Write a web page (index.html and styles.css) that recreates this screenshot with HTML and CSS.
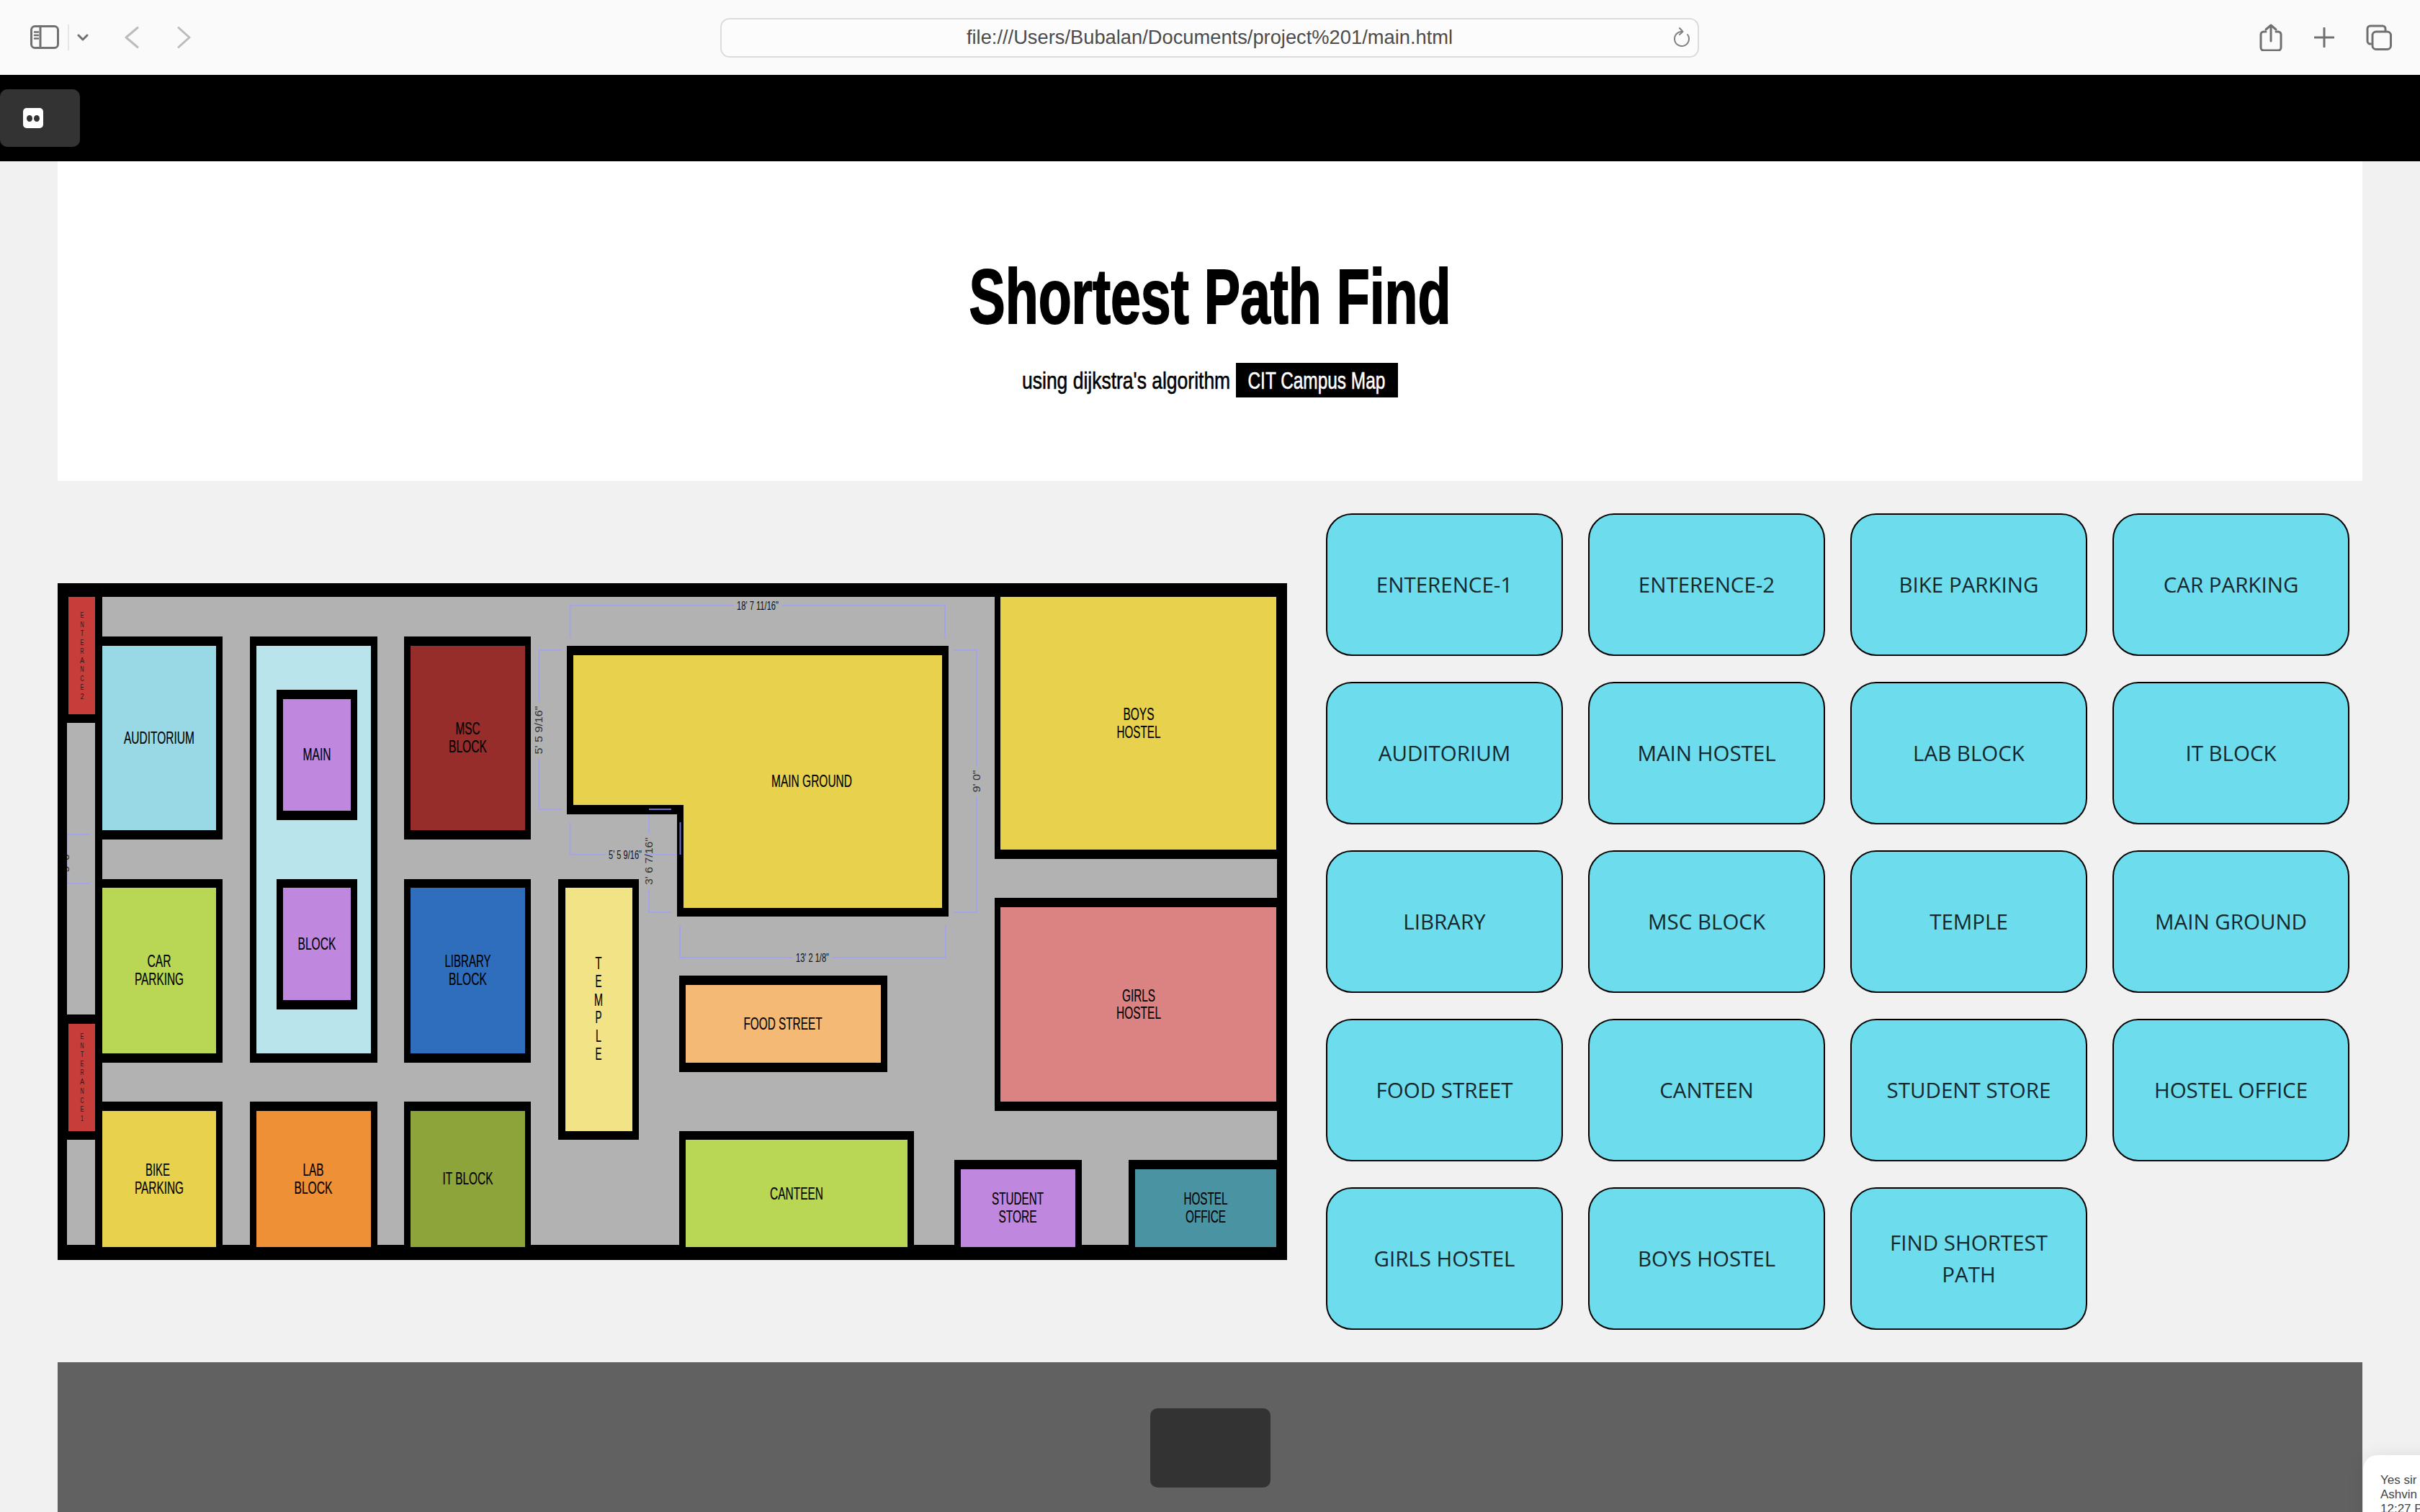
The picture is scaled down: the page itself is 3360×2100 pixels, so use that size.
FILE: index.html
```html
<!DOCTYPE html>
<html lang="en">
<head>
<meta charset="utf-8">
<title>Shortest Path Find</title>
<link rel="stylesheet" href="styles.css">
</head>
<body>
<header class="toolbar">
  <div class="tb-left">
    <svg class="tb-icon sidebar-icon" width="42" height="34" viewBox="0 0 42 34"><rect x="1.5" y="1.5" width="37" height="30" rx="5"/><path d="M14 2v29"/><path class="thin" d="M6 9.500h5M6 14h5M6 18.500h5"/></svg>
    <span class="tb-sep"></span>
    <svg class="tb-icon chevron" width="16" height="10" viewBox="0 0 16 10"><path d="M2 2l6 6 6-6"/></svg>
    <svg class="tb-icon nav back" width="20" height="30" viewBox="0 0 20 30"><path d="M18 1.500L2 15l16 13.500"/></svg>
    <svg class="tb-icon nav forward" width="20" height="30" viewBox="0 0 20 30"><path d="M2 1.500L17 15 2 28.500"/></svg>
  </div>
  <div class="urlbar">
    <span class="url-text">file:///Users/Bubalan/Documents/project%201/main.html</span>
    <svg class="tb-icon reload" width="24" height="30" viewBox="0 0 24 30"><path d="M20 11A10 10 0 1 1 12 7"/><path d="M9 2l4.500 5L9 11"/></svg>
  </div>
  <div class="tb-right">
    <svg class="tb-icon" width="32" height="38" viewBox="0 0 32 38"><path d="M9 11H6a4 4 0 0 0-4 4v18a4 4 0 0 0 4 4h20a4 4 0 0 0 4-4V15a4 4 0 0 0-4-4h-3"/><path d="M16 24V2M9 8l7-6 7 6"/></svg>
    <svg class="tb-icon" width="28" height="28" viewBox="0 0 28 28"><path d="M14 1v26M1 14h26"/></svg>
    <svg class="tb-icon" width="36" height="36" viewBox="0 0 36 36"><path d="M6.500 27H6a4 4 0 0 1-4-4V6a4 4 0 0 1 4-4h17a4 4 0 0 1 4 4v2"/><rect x="9" y="10" width="25.500" height="24.500" rx="5"/></svg>
  </div>
</header>

<div class="blackbar">
  <div class="blackbar-btn">
    <svg width="28" height="28" viewBox="0 0 28 28"><rect class="logo-bg" width="28" height="28" rx="5"/><ellipse class="logo-dot" cx="9" cy="14.500" rx="4" ry="4.500"/><ellipse class="logo-dot" cx="19" cy="14.500" rx="4" ry="4.500"/></svg>
  </div>
</div>

<div class="page">
  <section class="hero">
    <h1 class="title">Shortest Path Find</h1>
    <p class="subtitle"><span class="sub-text"><span class="squeeze-a">using dijkstra's algorithm</span></span><span class="sub-tag"><span class="squeeze-b">CIT Campus Map</span></span></p>
  </section>

  <main class="content">
    <svg class="map" width="1707" height="940" viewBox="80 810 1707 940">
      <rect class="wall" x="80" y="810" width="1707" height="940"/>
      <rect class="road" x="142" y="829" width="1631" height="900"/>
      <rect class="road" x="93" y="1004" width="39" height="405"/>
      <rect class="road" x="93" y="1583" width="39" height="146"/>

      <g class="dims">
        <path d="M791.500 886V841H1019M1086 841H1312V886"/>
        <path d="M779 903H748.500V975M748.500 1054V1124H779"/>
        <path d="M1325 903H1356V1065M1356 1106V1267H1325"/>
        <path d="M791.500 1142V1187H841M895 1187H944.500V1142"/>
        <path d="M932 1124H901V1157M901 1235V1267H932"/>
        <path d="M944 1285V1330H1100M1155 1330H1313V1285"/>
        <path d="M125 1159H93.500V1227H125"/>
      </g>
      <text class="dim-h" x="1052" y="847" textLength="58" lengthAdjust="spacingAndGlyphs">18' 7 11/16"</text>
      <text class="dim-h" x="868" y="1193" textLength="46" lengthAdjust="spacingAndGlyphs">5' 5 9/16"</text>
      <text class="dim-h" x="1128" y="1336" textLength="46" lengthAdjust="spacingAndGlyphs">13' 2 1/8"</text>
      <text class="dim-v" x="753" y="1014" transform="rotate(-90 753 1014)" textLength="67" lengthAdjust="spacingAndGlyphs">5' 5 9/16"</text>
      <text class="dim-v" x="1361" y="1085" transform="rotate(-90 1361 1085)" textLength="31" lengthAdjust="spacingAndGlyphs">9' 0"</text>
      <text class="dim-v" x="96" y="1196" transform="rotate(-90 96 1196)" textLength="31" lengthAdjust="spacingAndGlyphs">9' 0"</text>
      <rect class="wall" x="80" y="1004" width="13" height="746"/>

      <!-- walls -->
      <rect class="wall" x="132" y="810" width="10" height="940"/>
      <rect class="wall" x="132" y="884" width="177" height="282"/>
      <rect class="wall" x="132" y="1221" width="177" height="255"/>
      <rect class="wall" x="132" y="1530" width="177" height="220"/>
      <rect class="wall" x="347" y="884" width="177" height="592"/>
      <rect class="wall" x="347" y="1530" width="177" height="220"/>
      <rect class="wall" x="561" y="884" width="176" height="282"/>
      <rect class="wall" x="561" y="1221" width="176" height="255"/>
      <rect class="wall" x="561" y="1530" width="176" height="220"/>
      <rect class="wall" x="775" y="1221" width="112" height="362"/>
      <polygon class="wall" points="787,897 1317,897 1317,1273 940,1273 940,1131 787,1131"/>
      <rect class="wall" x="943" y="1355" width="289" height="134"/>
      <rect class="wall" x="943" y="1571" width="326" height="179"/>
      <rect class="wall" x="1325" y="1611" width="177" height="139"/>
      <rect class="wall" x="1567" y="1611" width="220" height="139"/>
      <rect class="wall" x="1381" y="810" width="406" height="383"/>
      <rect class="wall" x="1381" y="1247" width="406" height="296"/>

      <!-- rooms -->
      <rect class="room r-ent" x="95" y="829" width="37" height="163"/>
      <rect class="room r-ent" x="95" y="1422" width="37" height="149"/>
      <rect class="room r-aud" x="142" y="897" width="158" height="256"/>
      <rect class="room r-lime" x="142" y="1233" width="158" height="230"/>
      <rect class="room r-yellow" x="142" y="1543" width="158" height="189"/>
      <rect class="room r-pale" x="356" y="897" width="159" height="566"/>
      <rect class="wall" x="384" y="958" width="112" height="181"/>
      <rect class="wall" x="384" y="1221" width="112" height="181"/>
      <rect class="room r-purple" x="393" y="971" width="94" height="155"/>
      <rect class="room r-purple" x="393" y="1233" width="94" height="156"/>
      <rect class="room r-orange" x="356" y="1543" width="159" height="189"/>
      <rect class="room r-maroon" x="570" y="897" width="159" height="256"/>
      <rect class="room r-blue" x="570" y="1233" width="159" height="230"/>
      <rect class="room r-olive" x="570" y="1543" width="159" height="189"/>
      <rect class="room r-temple" x="785" y="1233" width="93" height="338"/>
      <polygon class="room r-yellow" points="796,910 1308,910 1308,1261 949,1261 949,1118 796,1118"/>
      <rect class="room r-food" x="952" y="1368" width="271" height="108"/>
      <rect class="room r-lime" x="952" y="1583" width="308" height="149"/>
      <rect class="room r-purple" x="1334" y="1624" width="159" height="108"/>
      <rect class="room r-teal" x="1576" y="1624" width="196" height="108"/>
      <rect class="room r-yellow" x="1389" y="829" width="383" height="351"/>
      <rect class="room r-rose" x="1389" y="1260" width="383" height="270"/>

      <!-- dimension marks that lie over the walls -->
      <path class="dims dims-over" d="M932 1124H901M944.500 1142V1187"/>
      <text class="dim-v" x="906" y="1196" transform="rotate(-90 906 1196)" textLength="66" lengthAdjust="spacingAndGlyphs">3' 6 7/16"</text>

      <!-- labels -->
      <text class="lbl" x="221" y="1033" textLength="98" lengthAdjust="spacingAndGlyphs">AUDITORIUM</text>
      <text class="lbl" x="440" y="1056" textLength="39" lengthAdjust="spacingAndGlyphs">MAIN</text>
      <text class="lbl" x="649.500" y="1020" textLength="34" lengthAdjust="spacingAndGlyphs">MSC</text>
      <text class="lbl" x="649.500" y="1045" textLength="53" lengthAdjust="spacingAndGlyphs">BLOCK</text>
      <text class="lbl" x="221" y="1343" textLength="33" lengthAdjust="spacingAndGlyphs">CAR</text>
      <text class="lbl" x="221" y="1368" textLength="68" lengthAdjust="spacingAndGlyphs">PARKING</text>
      <text class="lbl" x="440" y="1319" textLength="53" lengthAdjust="spacingAndGlyphs">BLOCK</text>
      <text class="lbl" x="649.500" y="1343" textLength="64" lengthAdjust="spacingAndGlyphs">LIBRARY</text>
      <text class="lbl" x="649.500" y="1368" textLength="53" lengthAdjust="spacingAndGlyphs">BLOCK</text>
      <text class="lbl" x="219" y="1633" textLength="34" lengthAdjust="spacingAndGlyphs">BIKE</text>
      <text class="lbl" x="221" y="1658" textLength="68" lengthAdjust="spacingAndGlyphs">PARKING</text>
      <text class="lbl" x="435" y="1633" textLength="29" lengthAdjust="spacingAndGlyphs">LAB</text>
      <text class="lbl" x="435" y="1658" textLength="53" lengthAdjust="spacingAndGlyphs">BLOCK</text>
      <text class="lbl" x="649.500" y="1645" textLength="70" lengthAdjust="spacingAndGlyphs">IT BLOCK</text>
      <text class="lbl" x="1127" y="1093" textLength="112" lengthAdjust="spacingAndGlyphs">MAIN GROUND</text>
      <text class="lbl" x="1581" y="1000" textLength="43" lengthAdjust="spacingAndGlyphs">BOYS</text>
      <text class="lbl" x="1581" y="1025" textLength="61" lengthAdjust="spacingAndGlyphs">HOSTEL</text>
      <text class="lbl" x="1581" y="1391" textLength="46" lengthAdjust="spacingAndGlyphs">GIRLS</text>
      <text class="lbl" x="1581" y="1415" textLength="62" lengthAdjust="spacingAndGlyphs">HOSTEL</text>
      <text class="lbl" x="1087" y="1430" textLength="109" lengthAdjust="spacingAndGlyphs">FOOD STREET</text>
      <text class="lbl" x="1106" y="1666" textLength="74" lengthAdjust="spacingAndGlyphs">CANTEEN</text>
      <text class="lbl" x="1413" y="1673" textLength="72" lengthAdjust="spacingAndGlyphs">STUDENT</text>
      <text class="lbl" x="1413" y="1698" textLength="53" lengthAdjust="spacingAndGlyphs">STORE</text>
      <text class="lbl" x="1674" y="1673" textLength="61" lengthAdjust="spacingAndGlyphs">HOSTEL</text>
      <text class="lbl" x="1674" y="1698" textLength="56" lengthAdjust="spacingAndGlyphs">OFFICE</text>

      <text class="lbl" x="831" y="1346" textLength="9" lengthAdjust="spacingAndGlyphs">T</text>
      <text class="lbl" x="831" y="1371" textLength="9" lengthAdjust="spacingAndGlyphs">E</text>
      <text class="lbl" x="831" y="1397" textLength="12" lengthAdjust="spacingAndGlyphs">M</text>
      <text class="lbl" x="831" y="1421" textLength="9" lengthAdjust="spacingAndGlyphs">P</text>
      <text class="lbl" x="831" y="1447" textLength="8" lengthAdjust="spacingAndGlyphs">L</text>
      <text class="lbl" x="831" y="1472" textLength="9" lengthAdjust="spacingAndGlyphs">E</text>

      <g class="ent">
        <text x="114" y="858" textLength="5" lengthAdjust="spacingAndGlyphs">E</text>
        <text x="114" y="871" textLength="5" lengthAdjust="spacingAndGlyphs">N</text>
        <text x="114" y="883" textLength="5" lengthAdjust="spacingAndGlyphs">T</text>
        <text x="114" y="896" textLength="5" lengthAdjust="spacingAndGlyphs">E</text>
        <text x="114" y="908" textLength="5" lengthAdjust="spacingAndGlyphs">R</text>
        <text x="114" y="921" textLength="6" lengthAdjust="spacingAndGlyphs">A</text>
        <text x="114" y="933" textLength="5" lengthAdjust="spacingAndGlyphs">N</text>
        <text x="114" y="946" textLength="5" lengthAdjust="spacingAndGlyphs">C</text>
        <text x="114" y="958" textLength="5" lengthAdjust="spacingAndGlyphs">E</text>
        <text x="114" y="971" textLength="5" lengthAdjust="spacingAndGlyphs">2</text>
        <text x="114" y="1443" textLength="5" lengthAdjust="spacingAndGlyphs">E</text>
        <text x="114" y="1456" textLength="5" lengthAdjust="spacingAndGlyphs">N</text>
        <text x="114" y="1468" textLength="5" lengthAdjust="spacingAndGlyphs">T</text>
        <text x="114" y="1481" textLength="5" lengthAdjust="spacingAndGlyphs">E</text>
        <text x="114" y="1493" textLength="5" lengthAdjust="spacingAndGlyphs">R</text>
        <text x="114" y="1506" textLength="6" lengthAdjust="spacingAndGlyphs">A</text>
        <text x="114" y="1519" textLength="5" lengthAdjust="spacingAndGlyphs">N</text>
        <text x="114" y="1532" textLength="5" lengthAdjust="spacingAndGlyphs">C</text>
        <text x="114" y="1544" textLength="5" lengthAdjust="spacingAndGlyphs">E</text>
        <text x="114" y="1557" textLength="4" lengthAdjust="spacingAndGlyphs">1</text>
      </g>
    </svg>

    <div class="places">
      <button class="place">ENTERENCE-1</button>
      <button class="place">ENTERENCE-2</button>
      <button class="place">BIKE PARKING</button>
      <button class="place">CAR PARKING</button>
      <button class="place">AUDITORIUM</button>
      <button class="place">MAIN HOSTEL</button>
      <button class="place">LAB BLOCK</button>
      <button class="place">IT BLOCK</button>
      <button class="place">LIBRARY</button>
      <button class="place">MSC BLOCK</button>
      <button class="place">TEMPLE</button>
      <button class="place">MAIN GROUND</button>
      <button class="place">FOOD STREET</button>
      <button class="place">CANTEEN</button>
      <button class="place">STUDENT STORE</button>
      <button class="place">HOSTEL OFFICE</button>
      <button class="place">GIRLS HOSTEL</button>
      <button class="place">BOYS HOSTEL</button>
      <button class="place">FIND SHORTEST PATH</button>
    </div>
  </main>

  <footer class="footer">
    <div class="footer-btn"></div>
  </footer>
</div>

<aside class="toast">Yes sir<br>Ashvin S<br>12:27 PM</aside>
</body>
</html>
```
FILE: styles.css
```css
* { box-sizing: border-box; }
html, body { margin: 0; height: 2100px; overflow: hidden; }
body { background: #f1f1f1; font-family: "Liberation Sans", sans-serif; position: relative; }

.toolbar { height: 104px; background: #fafafa; display: flex; align-items: center; position: relative; padding: 0 39px 0 42px; }
.tb-left { display: flex; align-items: center; width: 958px; }
.tb-icon { fill: none; stroke: #707070; stroke-width: 3; stroke-linecap: round; stroke-linejoin: round; display: block; }
.sidebar-icon { margin-right: 10px; }
.sidebar-icon .thin { stroke-width: 2.500; }
.tb-sep { width: 2px; height: 36px; background: #e6e6e6; margin-right: 11px; }
.chevron { margin-right: 50px; }
.nav { stroke: #bcbcbc; }
.back { margin-right: 53px; }
.urlbar { width: 1359px; height: 55px; border: 2px solid #dcdcdc; border-radius: 13px; background: #fcfcfc; display: flex; align-items: center; justify-content: center; position: relative; }
.url-text { font-size: 27.300px; color: #4c4c4c; white-space: nowrap; }
.reload { position: absolute; right: 10px; top: 10px; stroke-width: 2; stroke: #808080; }
.tb-right { margin-left: auto; display: flex; align-items: center; gap: 44px; }

.blackbar { height: 120px; background: #000; padding-top: 20px; }
.blackbar-btn { width: 111px; height: 80px; background: #333; border-radius: 10px; display: flex; align-items: center; padding-left: 32px; }
.blackbar-btn svg { display: block; }
.logo-bg { fill: #fff; }
.logo-dot { fill: #333; }

.page { width: 3200px; margin-left: 80px; }
.hero { height: 444px; background: #fff; display: flex; flex-direction: column; align-items: center; padding-top: 126px; }
.title { margin: 0; font-family: "Liberation Sans", sans-serif; font-weight: 700; font-size: 108px; line-height: 124px; color: #000; white-space: nowrap; transform: scaleX(.697); -webkit-text-stroke: 2px #000; }
.subtitle { margin: 30px 0 0; display: flex; align-items: center; height: 48px; font-size: 34px; white-space: nowrap; }
.sub-text { display: flex; justify-content: center; width: 289px; margin-right: 7px; }
.squeeze-a { flex: none; transform: scaleX(.779); -webkit-text-stroke: .6px #000; }
.sub-tag { display: flex; justify-content: center; align-items: center; width: 225px; height: 48px; background: #000; color: #fff; }
.squeeze-b { flex: none; transform: scaleX(.718); -webkit-text-stroke: .6px #fff; }

.content { height: 1224px; display: flex; align-items: center; gap: 54px; }
.map { display: block; flex: none; }
.places { display: grid; grid-template-columns: repeat(4, 329px); grid-auto-rows: 198px; gap: 36px 35px; }
.place { border: 2px solid #000; border-radius: 36px; background: #6ddcec; color: #14282d; font-family: "Open Sans", sans-serif; font-size: 29.500px; line-height: 44px; padding: 0 30px; text-align: center; }

.wall { fill: #000; }
.road { fill: #b2b2b2; }
.dims { fill: none; stroke: #a4a4e6; stroke-width: 2; }
.dims-over { stroke: #6f6fc8; }
.dim-h { font-size: 16px; fill: #111; text-anchor: middle; }
.dim-v { font-size: 14px; fill: #333; text-anchor: middle; }
.lbl { font-size: 24px; fill: #000; text-anchor: middle; stroke: #000; stroke-width: .2; }
.ent text { font-size: 11.500px; fill: #2a1a1a; text-anchor: middle; }
.r-ent { fill: #c63d39; }
.r-aud { fill: #99d9e6; }
.r-lime { fill: #b9d755; }
.r-yellow { fill: #e8d14c; }
.r-pale { fill: #b9e4ec; }
.r-purple { fill: #c087df; }
.r-orange { fill: #ee9036; }
.r-maroon { fill: #962d2a; }
.r-blue { fill: #2f6ebd; }
.r-olive { fill: #8da43b; }
.r-temple { fill: #f2e486; }
.r-food { fill: #f4b975; }
.r-teal { fill: #4a93a3; }
.r-rose { fill: #da8382; }

.footer { height: 208px; background: #616161; display: flex; justify-content: center; padding-top: 64px; }
.footer-btn { width: 167px; height: 110px; background: #333; border-radius: 10px; }

.toast { position: absolute; left: 3281px; top: 2021px; width: 120px; height: 120px; padding: 25px 0 0 24px; background: #fff; border-radius: 20px; box-shadow: 0 0 24px rgba(0,0,0,.08); font-size: 17px; line-height: 20px; color: #444; white-space: nowrap; }
```
